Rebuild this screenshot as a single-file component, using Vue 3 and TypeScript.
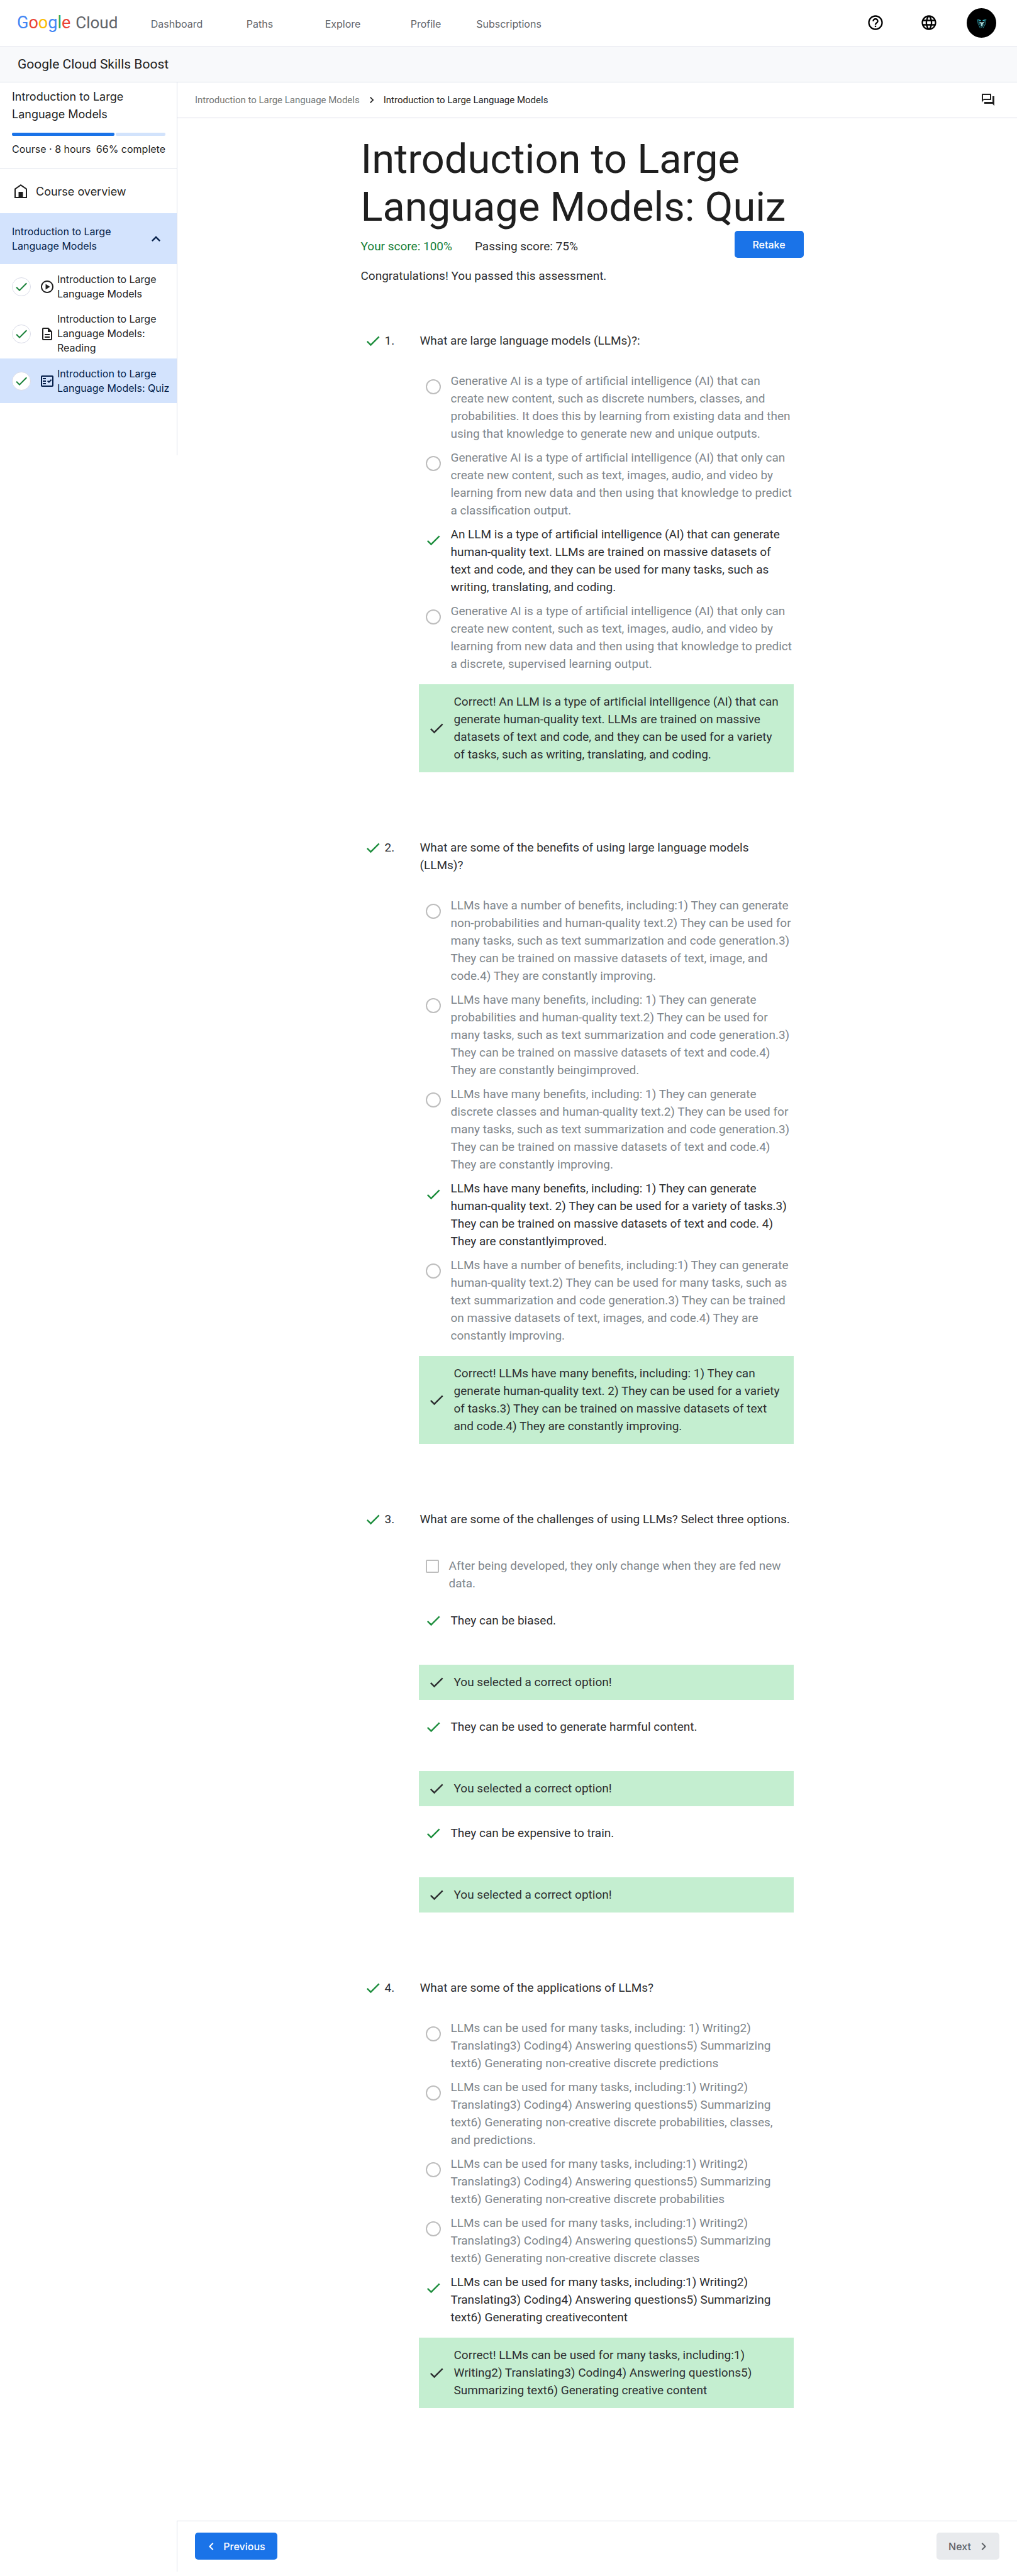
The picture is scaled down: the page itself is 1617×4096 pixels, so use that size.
<script setup lang="ts">
interface Option {
  text: string
  correct?: boolean
  feedback?: string
}

interface Question {
  title: string
  kind: 'radio' | 'checkbox'
  options: Option[]
  feedback?: string
}

interface Activity {
  title: string
  icon: 'video' | 'document' | 'quiz'
  active?: boolean
}

const navLinks: string[] = ['Dashboard', 'Paths', 'Explore', 'Profile', 'Subscriptions']

const logoLetters: { char: string; tone: string }[] = [
  { char: 'G', tone: 'blue' },
  { char: 'o', tone: 'red' },
  { char: 'o', tone: 'yellow' },
  { char: 'g', tone: 'blue' },
  { char: 'l', tone: 'green' },
  { char: 'e', tone: 'red' },
]

const progress = 67

const activities: Activity[] = [
  { title: 'Introduction to Large Language Models', icon: 'video' },
  { title: 'Introduction to Large Language Models: Reading', icon: 'document' },
  { title: 'Introduction to Large Language Models: Quiz', icon: 'quiz', active: true },
]

const questions: Question[] = [
  {
    title: 'What are large language models (LLMs)?:',
    kind: 'radio',
    options: [
      { text: 'Generative AI is a type of artificial intelligence (AI) that can create new content, such as discrete numbers, classes, and probabilities. It does this by learning from existing data and then using that knowledge to generate new and unique outputs.' },
      { text: 'Generative AI is a type of artificial intelligence (AI) that only can create new content, such as text, images, audio, and video by learning from new data and then using that knowledge to predict a classification output.' },
      { text: 'An LLM is a type of artificial intelligence (AI) that can generate human-quality text. LLMs are trained on massive datasets of text and code, and they can be used for many tasks, such as writing, translating, and coding.', correct: true },
      { text: 'Generative AI is a type of artificial intelligence (AI) that only can create new content, such as text, images, audio, and video by learning from new data and then using that knowledge to predict a discrete, supervised learning output.' },
    ],
    feedback: 'Correct! An LLM is a type of artificial intelligence (AI) that can generate human-quality text. LLMs are trained on massive datasets of text and code, and they can be used for a variety of tasks, such as writing, translating, and coding.',
  },
  {
    title: 'What are some of the benefits of using large language models (LLMs)?',
    kind: 'radio',
    options: [
      { text: 'LLMs have a number of benefits, including:1) They can generate non-probabilities and human-quality text.2) They can be used for many tasks, such as text summarization and code generation.3) They can be trained on massive datasets of text, image, and code.4) They are constantly improving.' },
      { text: 'LLMs have many benefits, including: 1) They can generate probabilities and human-quality text.2) They can be used for many tasks, such as text summarization and code generation.3) They can be trained on massive datasets of text and code.4) They are constantly beingimproved.' },
      { text: 'LLMs have many benefits, including: 1) They can generate discrete classes and human-quality text.2) They can be used for many tasks, such as text summarization and code generation.3) They can be trained on massive datasets of text and code.4) They are constantly improving.' },
      { text: 'LLMs have many benefits, including: 1) They can generate human-quality text. 2) They can be used for a variety of tasks.3) They can be trained on massive datasets of text and code. 4) They are constantlyimproved.', correct: true },
      { text: 'LLMs have a number of benefits, including:1) They can generate human-quality text.2) They can be used for many tasks, such as text summarization and code generation.3) They can be trained on massive datasets of text, images, and code.4) They are constantly improving.' },
    ],
    feedback: 'Correct! LLMs have many benefits, including: 1) They can generate human-quality text. 2) They can be used for a variety of tasks.3) They can be trained on massive datasets of text and code.4) They are constantly improving.',
  },
  {
    title: 'What are some of the challenges of using LLMs? Select three options.',
    kind: 'checkbox',
    options: [
      { text: 'After being developed, they only change when they are fed new data.' },
      { text: 'They can be biased.', correct: true, feedback: 'You selected a correct option!' },
      { text: 'They can be used to generate harmful content.', correct: true, feedback: 'You selected a correct option!' },
      { text: 'They can be expensive to train.', correct: true, feedback: 'You selected a correct option!' },
    ],
  },
  {
    title: 'What are some of the applications of LLMs?',
    kind: 'radio',
    options: [
      { text: 'LLMs can be used for many tasks, including: 1) Writing2) Translating3) Coding4) Answering questions5) Summarizing text6) Generating non-creative discrete predictions' },
      { text: 'LLMs can be used for many tasks, including:1) Writing2) Translating3) Coding4) Answering questions5) Summarizing text6) Generating non-creative discrete probabilities, classes, and predictions.' },
      { text: 'LLMs can be used for many tasks, including:1) Writing2) Translating3) Coding4) Answering questions5) Summarizing text6) Generating non-creative discrete probabilities' },
      { text: 'LLMs can be used for many tasks, including:1) Writing2) Translating3) Coding4) Answering questions5) Summarizing text6) Generating non-creative discrete classes' },
      { text: 'LLMs can be used for many tasks, including:1) Writing2) Translating3) Coding4) Answering questions5) Summarizing text6) Generating creativecontent', correct: true },
    ],
    feedback: 'Correct! LLMs can be used for many tasks, including:1) Writing2) Translating3) Coding4) Answering questions5) Summarizing text6) Generating creative content',
  },
]

const checkPath = 'M9 16.17 4.83 12l-1.42 1.41L9 19 21 7l-1.41-1.41z'
const chevronRight = 'M10 6 8.59 7.41 13.17 12l-4.58 4.59L10 18l6-6z'
const chevronLeft = 'M15.41 7.41 14 6l-6 6 6 6 1.41-1.41L10.83 12z'

const activityPaths: Record<Activity['icon'], string> = {
  video: 'M12 2C6.48 2 2 6.48 2 12s4.48 10 10 10 10-4.48 10-10S17.52 2 12 2zm0 18c-4.41 0-8-3.59-8-8s3.59-8 8-8 8 3.59 8 8-3.59 8-8 8zM9.5 16.5l7-4.5-7-4.5z',
  document: 'M8 16h8v2H8zm0-4h8v2H8zm6-10H6c-1.1 0-2 .9-2 2v16c0 1.1.89 2 1.99 2H18c1.1 0 2-.9 2-2V8l-6-6zm4 18H6V4h7v5h5v11z',
  quiz: 'M20 3H4c-1.1 0-2 .9-2 2v14c0 1.1.9 2 2 2h16c1.1 0 2-.9 2-2V5c0-1.1-.9-2-2-2zm0 16H4V5h16v14zM19.41 10.42 17.99 9l-3.17 3.17-1.41-1.42L12 12.16 14.82 15zM5 7h5v2H5zM5 11h5v2H5zM5 15h5v2H5z',
}
</script>

<template>
  <div class="page">
    <header class="topbar">
      <a class="logo" href="#" aria-label="Google Cloud">
        <span class="logo-google"><span v-for="(letter, i) in logoLetters" :key="i" :class="letter.tone">{{ letter.char }}</span></span>
        <span class="logo-cloud">Cloud</span>
      </a>
      <nav class="topnav">
        <a v-for="link in navLinks" :key="link" href="#">{{ link }}</a>
      </nav>
      <div class="tools">
        <button type="button" class="tool" aria-label="Help">
          <svg viewBox="0 0 24 24"><path d="M11 18h2v-2h-2v2zm1-16C6.48 2 2 6.48 2 12s4.48 10 10 10 10-4.48 10-10S17.52 2 12 2zm0 18c-4.41 0-8-3.59-8-8s3.59-8 8-8 8 3.59 8 8-3.59 8-8 8zm0-14c-2.21 0-4 1.79-4 4h2c0-1.1.9-2 2-2s2 .9 2 2c0 2-3 1.75-3 5h2c0-2.25 3-2.5 3-5 0-2.21-1.79-4-4-4z" /></svg>
        </button>
        <button type="button" class="tool" aria-label="Language">
          <svg viewBox="0 0 24 24"><path d="M11.99 2C6.47 2 2 6.48 2 12s4.47 10 9.99 10C17.52 22 22 17.52 22 12S17.52 2 11.99 2zm6.93 6h-2.95c-.32-1.25-.78-2.45-1.38-3.56 1.84.63 3.37 1.91 4.33 3.56zM12 4.04c.83 1.2 1.48 2.53 1.91 3.96h-3.82c.43-1.43 1.08-2.76 1.91-3.96zM4.26 14C4.1 13.36 4 12.69 4 12s.1-1.36.26-2h3.38c-.08.66-.14 1.32-.14 2s.06 1.34.14 2H4.26zm.82 2h2.95c.32 1.25.78 2.45 1.38 3.56-1.84-.63-3.37-1.9-4.33-3.56zm2.95-8H5.08c.96-1.66 2.49-2.93 4.33-3.56C8.81 5.55 8.35 6.75 8.03 8zM12 19.96c-.83-1.2-1.48-2.53-1.91-3.96h3.82c-.43 1.43-1.08 2.76-1.91 3.96zM14.34 14H9.66c-.09-.66-.16-1.32-.16-2s.07-1.35.16-2h4.68c.09.65.16 1.32.16 2s-.07 1.34-.16 2zm.25 5.56c.6-1.11 1.06-2.31 1.38-3.56h2.95c-.96 1.65-2.49 2.93-4.33 3.56zM16.36 14c.08-.66.14-1.32.14-2s-.06-1.34-.14-2h3.38c.16.64.26 1.31.26 2s-.1 1.36-.26 2h-3.38z" /></svg>
        </button>
        <button type="button" class="avatar" aria-label="Account">
          <svg viewBox="0 0 48 48">
            <g fill="none" stroke="#2a8c99" stroke-width="1">
              <path d="M17.5 18 18.5 25 22 32.5M19.5 21l1.5 5 3 5.5M31.5 18l-1 7-4 7.5M29 21l-1.5 5-3 5.5" />
            </g>
            <path d="M18 18l5 1.5v1.5l-4-1zM31 18l-5 1.5v1.5l4-1z" fill="#35c3d4" />
            <path d="M20 22l3.5 1h2l3.5-1-2.5 3-1.5 4.5h-1L22.5 25z" fill="#a9dcdc" />
          </svg>
        </button>
      </div>
    </header>

    <div class="product-bar">Google Cloud Skills Boost</div>

    <div class="body">
      <aside class="sidebar">
        <section class="course-summary">
          <h2>Introduction to Large Language Models</h2>
          <div class="progress" role="progressbar" :aria-valuenow="progress">
            <div class="progress-done" :style="{ width: progress + '%' }"></div>
            <div class="progress-rest"></div>
          </div>
          <div class="course-meta"><span>Course · 8 hours</span><span>66% complete</span></div>
        </section>

        <a class="overview" href="#">
          <svg viewBox="0 0 20 22"><path d="M10 0 0 7v15h20V7zM18 20h-4.5v-8h-7v8H2V8l8-5.6L18 8z" fill-rule="evenodd" /></svg>
          <span>Course overview</span>
        </a>

        <button type="button" class="module" aria-expanded="true">
          <span>Introduction to Large Language Models</span>
          <svg viewBox="0 0 24 24"><path d="M12 8l-6 6 1.41 1.41L12 10.83l4.59 4.58L18 14z" /></svg>
        </button>

        <ul class="activities">
          <li v-for="activity in activities" :key="activity.title">
            <a class="activity" :class="{ active: activity.active }" href="#">
              <span class="done"><svg viewBox="0 0 24 24"><path :d="checkPath" /></svg></span>
              <svg class="activity-icon" viewBox="0 0 24 24"><path :d="activityPaths[activity.icon]" fill-rule="evenodd" /></svg>
              <span class="activity-title">{{ activity.title }}</span>
            </a>
          </li>
        </ul>
      </aside>

      <main class="main">
        <div class="crumbs">
          <a href="#">Introduction to Large Language Models</a>
          <svg viewBox="0 0 24 24"><path :d="chevronRight" /></svg>
          <span>Introduction to Large Language Models</span>
          <button type="button" class="forum" aria-label="Discussion">
            <svg viewBox="0 0 24 24"><path d="M15 4v6H5.17L4 11.17V4h11m2-2H2v14l3-4h12V2zm5 4h-3v9H6v3h13l3 3.5V6z" /></svg>
          </button>
        </div>

        <article class="quiz">
          <h1>Introduction to Large Language Models: Quiz</h1>
          <div class="result">
            <div>
              <p class="scores"><span class="score">Your score: 100%</span><span>Passing score: 75%</span></p>
              <p>Congratulations! You passed this assessment.</p>
            </div>
            <button type="button" class="btn primary retake">Retake</button>
          </div>

          <ol class="questions">
            <li v-for="(question, q) in questions" :key="q" class="question">
              <div class="mark">
                <svg class="check" viewBox="0 0 24 24"><path :d="checkPath" /></svg>
                <span>{{ q + 1 }}.</span>
              </div>
              <div class="answer">
                <p class="question-title">{{ question.title }}</p>
                <div class="options" :class="question.kind">
                  <template v-for="(option, o) in question.options" :key="o">
                    <div v-if="option.correct" class="option correct">
                      <svg class="check" viewBox="0 0 24 24"><path :d="checkPath" /></svg>
                      <span>{{ option.text }}</span>
                    </div>
                    <label v-else class="option">
                      <input :type="question.kind" :name="'question-' + q" disabled />
                      <span>{{ option.text }}</span>
                    </label>
                    <div v-if="option.feedback" class="feedback">
                      <svg viewBox="0 0 24 24"><path :d="checkPath" /></svg>
                      <span>{{ option.feedback }}</span>
                    </div>
                  </template>
                </div>
                <div v-if="question.feedback" class="feedback">
                  <svg viewBox="0 0 24 24"><path :d="checkPath" /></svg>
                  <span>{{ question.feedback }}</span>
                </div>
              </div>
            </li>
          </ol>
        </article>

        <footer class="pager">
          <button type="button" class="btn primary previous">
            <svg viewBox="0 0 24 24"><path :d="chevronLeft" /></svg>Previous
          </button>
          <button type="button" class="btn next" disabled>
            Next<svg viewBox="0 0 24 24"><path :d="chevronRight" /></svg>
          </button>
        </footer>
      </main>
    </div>
  </div>
</template>

<style>
body {
  margin: 0;
  background: #fff;
}
</style>

<style scoped>
.page {
  font-family: Inter, Roboto, sans-serif;
  font-size: 16px;
  color: #1f1f1f;
}
h1,
h2,
p,
ul,
ol {
  margin: 0;
  padding: 0;
  font-weight: 400;
}
ul,
ol {
  list-style: none;
}
a {
  color: inherit;
  text-decoration: none;
}
button {
  margin: 0;
  padding: 0;
  border: 0;
  background: none;
  color: inherit;
  font: inherit;
}
svg {
  display: block;
  flex: none;
  fill: currentColor;
}

/* Top bar */
.topbar {
  display: flex;
  align-items: center;
  height: 72px;
  padding: 0 33px 2px 27px;
  border-bottom: 1px solid #dadce8;
}
.logo {
  display: flex;
  align-items: baseline;
  gap: 8px;
  width: 188px;
  font-family: Roboto, sans-serif;
  font-size: 27px;
  line-height: 32px;
}
.logo-cloud {
  font-size: 26px;
  color: #5f6368;
}
.blue {
  color: #4285f4;
}
.red {
  color: #ea4335;
}
.yellow {
  color: #fbbc04;
}
.green {
  color: #34a853;
}
.topnav {
  display: flex;
  flex: 1;
  padding-top: 3px;
  color: #5f6368;
}
.topnav a {
  width: 132px;
  text-align: center;
  line-height: 24px;
}
.tools {
  display: flex;
  align-items: center;
  gap: 28px;
  color: #000;
}
.tool {
  display: flex;
  justify-content: center;
  width: 57px;
}
.tool svg {
  width: 28px;
  height: 28px;
}
.avatar {
  width: 47px;
  height: 47px;
  margin-left: 4px;
  border-radius: 50%;
  background: #000;
}
.product-bar {
  height: 55px;
  padding: 0 28px;
  border-bottom: 1px solid #dadfe8;
  background: #f8f9fb;
  font-family: Roboto, sans-serif;
  font-size: 21px;
  line-height: 55px;
}
.body {
  display: flex;
  align-items: flex-start;
}

/* Sidebar */
.sidebar {
  flex: none;
  width: 281px;
  min-height: 593px;
  border-right: 1px solid #dadfe8;
}
.course-summary {
  padding: 9px 18px 19px 19px;
  border-bottom: 1px solid #dadfe8;
}
.course-summary h2 {
  font-size: 18px;
  line-height: 28px;
}
.progress {
  display: flex;
  gap: 2px;
  height: 5px;
  margin: 15px 0 9px;
}
.progress-done {
  border-radius: 2px;
  background: #1a73e8;
}
.progress-rest {
  flex: 1;
  border-radius: 2px;
  background: #d2e3fc;
}
.course-meta {
  display: flex;
  justify-content: space-between;
  line-height: 24px;
}
.overview {
  display: flex;
  align-items: center;
  gap: 14px;
  height: 70px;
  padding-left: 23px;
  font-size: 18px;
}
.overview svg {
  width: 20px;
  height: 22px;
}
.module {
  display: flex;
  align-items: center;
  justify-content: space-between;
  width: 100%;
  height: 81px;
  padding: 0 19px;
  background: #d3e3fd;
  color: #041e49;
  text-align: left;
  line-height: 23px;
}
.module span {
  width: 190px;
}
.module svg {
  width: 28px;
  height: 28px;
}
.activity {
  display: flex;
  align-items: center;
  min-height: 71px;
  box-sizing: border-box;
  padding: 5px 0 5px 19px;
  line-height: 23px;
}
.activity.active {
  background: #d3e3fd;
  color: #041e49;
}
.done {
  display: flex;
  flex: none;
  align-items: center;
  justify-content: center;
  width: 28px;
  height: 28px;
  border: 1px solid #dadce8;
  border-radius: 50%;
  background: #fff;
  color: #188038;
}
.done svg {
  width: 24px;
  height: 24px;
}
.activity-icon {
  width: 24px;
  height: 24px;
  margin: 0 4px 0 14px;
}

/* Main column */
.main {
  flex: 1;
  min-width: 0;
}
.crumbs {
  display: flex;
  align-items: center;
  height: 56px;
  padding: 0 34px 0 28px;
  border-bottom: 1px solid #dadce8;
  font-family: Roboto, sans-serif;
  font-size: 15px;
  line-height: 24px;
}
.crumbs a {
  color: #747775;
}
.crumbs > svg {
  width: 20px;
  height: 20px;
  margin: 0 9px;
}
.forum {
  margin-left: auto;
}
.forum svg {
  width: 24px;
  height: 24px;
}
.quiz {
  max-width: 704px;
  margin: 0 auto;
  padding: 27px 48px 179px 0;
  font-family: Roboto, sans-serif;
  font-size: 19px;
  line-height: 28px;
  color: #2d2e30;
}
.quiz h1 {
  font-size: 65px;
  line-height: 76px;
  color: #1f1f1f;
}
.result {
  display: flex;
  align-items: flex-start;
  justify-content: space-between;
}
.scores {
  display: flex;
  gap: 36px;
  margin: 11px 0 19px;
}
.score {
  color: #188038;
}
.btn {
  display: flex;
  align-items: center;
  justify-content: center;
  box-sizing: border-box;
  height: 43px;
  border-radius: 5px;
  font-family: Inter, Roboto, sans-serif;
  font-size: 16px;
  font-weight: 500;
  line-height: 24px;
}
.primary {
  background: #1a73e8;
  color: #fff;
}
.retake {
  width: 110px;
}

/* Questions */
.questions {
  display: grid;
  gap: 106px;
  margin-top: 75px;
}
.question {
  display: flex;
}
.mark {
  display: flex;
  flex: none;
  gap: 5px;
  width: 87px;
  height: 28px;
  padding-left: 5px;
}
.check {
  width: 28px;
  height: 28px;
  color: #1e8e3e;
}
.answer {
  flex: 1;
  min-width: 0;
  margin-right: 16px;
}
.question-title {
  margin: 0 0 36px 2px;
}
.options {
  display: grid;
  gap: 10px;
}
.option {
  display: flex;
  align-items: flex-start;
  gap: 14px;
  padding-left: 9px;
  color: #80868b;
}
.correct {
  color: #2d2e30;
}
.option .check {
  margin-top: 9px;
}
.option input {
  flex: none;
  appearance: none;
  box-sizing: border-box;
  width: 24px;
  height: 24px;
  margin: 11px 2px 0;
  border: 2px solid #bdbdbd;
  border-radius: 50%;
  background: #fff;
}
.feedback {
  display: flex;
  align-items: center;
  gap: 14px;
  margin-top: 18px;
  padding: 14px;
  background: #c4eed0;
}
.feedback svg {
  width: 28px;
  height: 28px;
}
.options.checkbox {
  display: block;
  padding-top: 10px;
}
.checkbox .option .check {
  margin-top: 0;
}
.checkbox .option input {
  width: 21px;
  height: 21px;
  margin: 4px 2px 0;
  border-radius: 2px;
}
.checkbox .option {
  margin-top: 31px;
}
.checkbox .option:first-child {
  margin-top: 0;
}
.checkbox .feedback + .option {
  margin-top: 29px;
}
.checkbox .feedback {
  margin-top: 56px;
}

/* Pager */
.pager {
  display: flex;
  justify-content: space-between;
  margin-left: -1px;
  padding: 18px 28px 19px;
  border-top: 1px solid #dadfe8;
  border-left: 1px solid #dadfe8;
}
.pager svg {
  width: 24px;
  height: 24px;
}
.previous {
  gap: 7px;
  width: 131px;
  padding-right: 5px;
}
.next {
  gap: 8px;
  width: 100px;
  padding-left: 6px;
  background: #e8eaed;
  color: #5f6368;
}
</style>
